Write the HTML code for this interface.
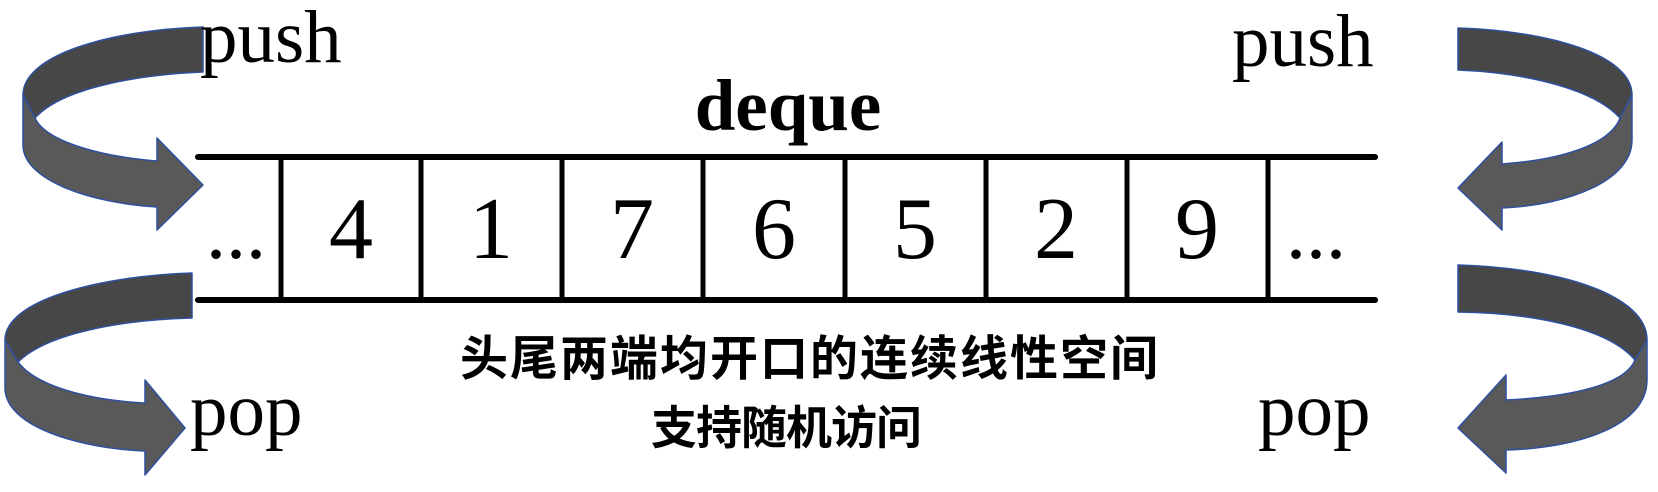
<!DOCTYPE html>
<html><head><meta charset="utf-8"><style>
html,body{margin:0;padding:0;background:#fff;}
svg{display:block;}
.t{font-family:"Liberation Serif",serif;}
.c{font-family:"Liberation Sans","Noto Sans CJK SC",sans-serif;font-weight:bold;}
</style></head><body>
<svg width="1658" height="492" viewBox="0 0 1658 492" xmlns="http://www.w3.org/2000/svg">
<g stroke="#2f4f9f" stroke-width="1.5" stroke-linejoin="round">
<path d="M203,27 C110,30 23,55 23,95 L35,118 C60,90 130,75 203,72 Z" fill="#474747"/>
<path d="M23,95 L23,145 C23,180 90,203 157,207 L157,230 L203,185 L157,138 L157,161 C95,156 45,140 35,118 Z" fill="#595959"/>
<path d="M192,273 C100,276 5,300 5,340 L18,362 C45,335 115,320 192,318 Z" fill="#474747"/>
<path d="M5,340 L5,388 C5,425 75,448 145,451 L145,475 L185,428 L145,380 L145,403 C85,400 35,385 18,362 Z" fill="#595959"/>
<path d="M1458,28 C1550,31 1632,55 1632,95 L1620,118 C1595,90 1530,73 1458,70 Z" fill="#474747"/>
<path d="M1632,95 L1632,140 C1632,180 1570,205 1502,208 L1502,230 L1458,188 L1502,142 L1502,164 C1560,160 1610,145 1620,118 Z" fill="#595959"/>
<path d="M1458,265 C1560,268 1647,295 1647,340 L1635,360 C1610,330 1540,313 1458,312 Z" fill="#474747"/>
<path d="M1647,340 L1647,380 C1647,425 1580,448 1506,450 L1506,473 L1458,428 L1506,375 L1506,400 C1570,397 1625,385 1635,360 Z" fill="#595959"/>
</g>
<g stroke="#000" stroke-width="6" stroke-linecap="round">
<line x1="198" y1="157" x2="1375" y2="157"/>
<line x1="198" y1="300" x2="1375" y2="300"/>
</g>
<g stroke="#000" stroke-width="5">
<line x1="281" y1="157" x2="281" y2="300"/>
<line x1="421" y1="157" x2="421" y2="300"/>
<line x1="562" y1="157" x2="562" y2="300"/>
<line x1="703" y1="157" x2="703" y2="300"/>
<line x1="845" y1="157" x2="845" y2="300"/>
<line x1="986" y1="157" x2="986" y2="300"/>
<line x1="1127" y1="157" x2="1127" y2="300"/>
<line x1="1268" y1="157" x2="1268" y2="300"/>
</g>
<g class="t" font-size="88" text-anchor="middle" fill="#000">
<text x="236" y="258" font-size="80">...</text>
<text x="351" y="258">4</text>
<text x="491" y="258">1</text>
<text x="632" y="258">7</text>
<text x="774" y="258">6</text>
<text x="915" y="258">5</text>
<text x="1056" y="258">2</text>
<text x="1197" y="258">9</text>
<text x="1316" y="258" font-size="80">...</text>
<text x="788" y="130" font-weight="bold" font-size="73">deque</text>
</g>
<g class="t" font-size="75" fill="#000">
<text x="200" y="62">push</text>
<text x="1232" y="66">push</text>
<text x="190" y="435">pop</text>
<text x="1258" y="435">pop</text>
</g>
<g class="c" text-anchor="middle" fill="#000">
<text x="810" y="375" font-size="48" letter-spacing="2">头尾两端均开口的连续线性空间</text>
<text x="786" y="444" font-size="46" letter-spacing="-1">支持随机访问</text>
</g>
</svg>
</body></html>
